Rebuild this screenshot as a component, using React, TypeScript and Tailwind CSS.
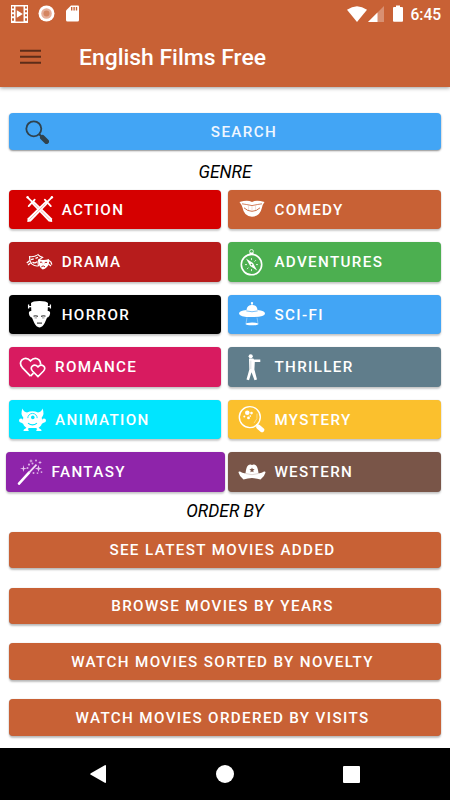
import React from 'react'

type Genre = {
  label: string
  color: string
  icon: React.ReactNode
  className?: string
}

const leftGenres: Genre[] = [
  { label: 'ACTION', color: 'bg-[#d50000]', icon: <SwordsIcon />, className: 'ml-[9px] mr-[3.6px] pl-[16.7px]' },
  { label: 'DRAMA', color: 'bg-[#b71c1c]', icon: <MasksIcon />, className: 'ml-[9px] mr-[3.6px] pl-[16.7px]' },
  { label: 'HORROR', color: 'bg-black', icon: <MonsterHeadIcon />, className: 'ml-[9px] mr-[3.6px] pl-[16.7px]' },
  { label: 'ROMANCE', color: 'bg-[#d81b60]', icon: <HeartsIcon />, className: 'ml-[9px] mr-[3.6px] pl-2.5' },
  { label: 'ANIMATION', color: 'bg-[#00e5ff]', icon: <CreatureIcon />, className: 'ml-[9px] mr-[3.6px] pl-2.5' },
  { label: 'FANTASY', color: 'bg-[#8e24aa]', icon: <WandIcon />, className: 'ml-1.5 pl-[9.6px]' },
]

const rightGenres: Genre[] = [
  { label: 'COMEDY', color: 'bg-[#c86135]', icon: <MouthIcon /> },
  { label: 'ADVENTURES', color: 'bg-[#4caf50]', icon: <CompassIcon /> },
  { label: 'SCI-FI', color: 'bg-[#42a5f5]', icon: <UfoIcon /> },
  { label: 'THRILLER', color: 'bg-[#607d8b]', icon: <ZombieIcon /> },
  { label: 'MYSTERY', color: 'bg-[#fbc02d]', icon: <MysteryIcon /> },
  { label: 'WESTERN', color: 'bg-[#795548]', icon: <HatIcon /> },
]

const orders = [
  'SEE LATEST MOVIES ADDED',
  'BROWSE MOVIES BY YEARS',
  'WATCH MOVIES SORTED BY NOVELTY',
  'WATCH MOVIES ORDERED BY VISITS',
]

export default function App() {
  return (
    <div className="flex h-[800px] w-[450px] flex-col overflow-hidden bg-white font-['Roboto',sans-serif]">
      <header className="h-[87px] shrink-0 bg-[#c86135] shadow-[0_1px_4px_rgba(0,0,0,0.4)]">
        <StatusBar />
        <div className="flex h-[60px] items-center pl-5">
          <svg width="21" height="15" viewBox="0 0 21 15" className="mb-0.5 fill-[#5d2d19]">
            <path d="M0 .7h21v2H0zM0 6.7h21v2H0zM0 12.7h21v2H0z" />
          </svg>
          <h1 className="ml-[38px] pt-[3px] text-[22.9px] font-medium text-white">English Films Free</h1>
        </div>
      </header>

      <main className="flex grow flex-col pt-[26px]">
        <button className="mx-[9px] flex h-[37px] shrink-0 items-center rounded bg-[#42a5f5] pl-4 shadow-[0_1px_2px_rgba(0,0,0,0.45)]">
          <svg width="24" height="24" viewBox="0 0 24 24" className="shrink-0">
            <circle cx="8.8" cy="8.8" r="7.5" fill="none" stroke="#30424d" strokeWidth="1.8" />
            <path d="M14 14l3 3" stroke="#30424d" strokeWidth="2" />
            <path d="M17.500 17.500l4 4" stroke="#30424d" strokeWidth="5" strokeLinecap="round" />
          </svg>
          <span className="grow pt-0.5 pr-0.5 text-center text-[15.2px] font-medium tracking-[1.36px] text-blue-50">SEARCH</span>
        </button>

        <SectionTitle className="mt-[9px]">GENRE</SectionTitle>
        <div className="mt-[4.6px] grid shrink-0 grid-cols-[225px_225px]">
          <div className="flex flex-col gap-[13px]">
            {leftGenres.map((g) => (
              <GenreButton key={g.label} {...g} />
            ))}
          </div>
          <div className="flex flex-col gap-[13px]">
            {rightGenres.map((g) => (
              <GenreButton key={g.label} {...g} className="ml-[3.4px] mr-[9px] pl-2.5" />
            ))}
          </div>
        </div>

        <SectionTitle className="mt-[6px]">ORDER BY</SectionTitle>
        <div className="mx-[9px] mt-[8.3px] flex flex-col gap-[19.3px]">
          {orders.map((label) => (
            <button
              key={label}
              className="h-[36.5px] shrink-0 rounded bg-[#c86135] pt-px pr-[5px] text-[15.2px] font-medium tracking-[1.36px] whitespace-nowrap text-white shadow-[0_2px_2px_rgba(0,0,0,0.25),0_0_1px_rgba(0,0,0,0.3)]"
            >
              {label}
            </button>
          ))}
        </div>
      </main>

      <nav className="flex h-[52px] shrink-0 items-center bg-black pl-[90px]">
        <svg width="16" height="18" viewBox="0 0 16 18" fill="white">
          <path d="M14.8.2Q16-.2 16 1v16q0 1.2-1.2.8L.8 9.8Q-.4 9 .8 8.2z" />
        </svg>
        <div className="ml-[110px] size-[18px] rounded-full bg-white" />
        <div className="ml-[109px] size-[17px] rounded-[1px] bg-white" />
      </nav>
    </div>
  )
}

function StatusBar() {
  return (
    <div className="flex h-[27px] items-center pl-[11px]">
      <svg width="17" height="18" viewBox="0 0 17 18">
        <path fill="white" d="M0 0h17v18H0z" />
        <path fill="#c86135" d="M4.5 1.5h8v15h-8zM1 1.5h2v2H1zM1 5.3h2v2H1zM1 9.3h2v2H1zM1 13.3h2v2.5H1zM14 1.5h2v2h-2zM14 5.3h2v2h-2zM14 9.3h2v2h-2zM14 13.3h2v2.5h-2z" />
        <path fill="white" d="M5.8 5.3l6 3.7-6 3.7z" />
      </svg>
      <svg width="17" height="17" viewBox="0 0 17 17" className="ml-2.5">
        <circle cx="8.5" cy="8.5" r="8" fill="white" />
        <circle cx="8.5" cy="8.5" r="5.3" fill="#e6ae98" />
        <circle cx="8.5" cy="8.5" r="3" fill="#d48561" />
      </svg>
      <svg width="13" height="17" viewBox="0 0 13 17" className="ml-[11px]">
        <path fill="white" d="M5 .5h7q1 0 1 1V15q0 1.5-1.5 1.5h-10Q0 16.5 0 15V5.5z" />
        <path fill="#c86135" d="M5 2h1.4v3.5H5zM7.4 2h1.4v3.5H7.4zM9.8 2h1.4v3.5H9.8z" />
      </svg>
      <svg width="20" height="16" viewBox="0 0 20 16" className="ml-[267.5px]">
        <path fill="white" d="M0 3.8Q10-3.5 20 3.8L10 16z" />
      </svg>
      <svg width="16" height="16" viewBox="0 0 16 16" className="ml-[1.5px]">
        <path fill="white" fillOpacity=".3" d="M16 0v16H0z" />
        <path fill="white" d="M9.5 6.5V16H0z" />
      </svg>
      <svg width="10" height="17" viewBox="0 0 10 17" className="ml-[9px]">
        <path fill="white" d="M3 .5h4v1.5h2q1 0 1 1V16q0 .8-1 .8H1q-1 0-1-.8V3q0-1 1-1h2z" />
      </svg>
      <span className="ml-[7.5px] pt-[3px] text-[15.6px] leading-4 font-medium text-white">6:45</span>
    </div>
  )
}

function SectionTitle({ children, className = '' }: { children: React.ReactNode; className?: string }) {
  return <h2 className={`h-[26px] shrink-0 text-center text-[17.4px] leading-[26px] italic text-black ${className}`}>{children}</h2>
}

function GenreButton({ label, color, icon, className = '' }: Genre) {
  return (
    <button
      className={`flex h-[39.5px] items-center gap-2 rounded text-[15.2px] font-medium tracking-[1.36px] text-white shadow-[0_2px_2px_rgba(0,0,0,0.2),0_0_1px_rgba(0,0,0,0.3)] ${color} ${className}`}
    >
      {icon}
      <span className="pt-0.5">{label}</span>
    </button>
  )
}

function Icon({ children }: { children: React.ReactNode }) {
  return (
    <svg width="28" height="28" viewBox="0 -0.6 28 28" fill="white" className="shrink-0">
      {children}
    </svg>
  )
}

function Sword() {
  return (
    <g>
      <path d="M1.800 2L7 7" stroke="white" strokeWidth="1.800" strokeLinecap="round" />
      <circle cx="1.600" cy="1.700" r="1.200" />
      <path d="M2.700 10.500l6-6.500" stroke="white" strokeWidth="1.800" fill="none" strokeLinecap="round" />
      <path d="M5.500 8L8 5.500 26 22.800l.2 3.500-3.500-.3z" />
      <path d="M8 8l16 16" stroke="#d50000" strokeOpacity=".6" strokeWidth=".5" />
    </g>
  )
}

function SwordsIcon() {
  return (
    <Icon>
      <Sword />
      <g transform="translate(27.500 0) scale(-1 1)">
        <Sword />
      </g>
    </Icon>
  )
}

function MasksIcon() {
  return (
    <Icon>
      <path d="M3.500 8Q8 8.800 12 6q1.500 2 4.500 2.800l-2 1.400q-2.500 1-2.500 4l.5 3Q9 18 6 15.500 3.500 13 3.500 8z" fill="none" stroke="white" strokeWidth="1.100" />
      <path d="M5 11l2.800-.8M9.500 9.800l2.500-1M6.500 13.500q2.500 1.800 4.500-.5" fill="none" stroke="white" strokeWidth="1.300" />
      <path d="M.8 14.500l3-2.500M2 16.500l2.500-2" stroke="white" strokeWidth="1.300" />
      <path d="M12.500 10.500q5 2 10.500 0 .8 5-2 8-2 2.300-4.300 2.300Q11.500 18 12.500 10.500z" />
      <path d="M14 13.700q1.300-.7 2.300.5M18.700 14.300q1.200-1.100 2.400-.4M15.300 18.300q1.800-2 3.700 0" fill="none" stroke="#b71c1c" strokeWidth="1" />
      <path d="M23 12l2 1.500.8 2.500M22.500 15.500l2.500 2" fill="none" stroke="white" strokeWidth="1.300" />
    </Icon>
  )
}

function MonsterHeadIcon() {
  return (
    <Icon>
      <path d="M5 2.500Q6.500.3 13.500.3T22 2.500l-.3 8q2.700-.3 2.400 2.500-.6 3.700-3 4l-2.400 5.500q-2 4.200-5.200 4.500-3.200-.3-5.200-4.500L5.900 17q-2.400-.3-3-4-.3-2.800 2.400-2.500z" />
      <path d="M2.600 4v4M24.400 4v4M2.800 6H6M21 6h3.200" stroke="white" strokeWidth="1.300" />
      <path d="M7.500 15.500q2.300-.6 4.500.2M19.500 15.500q-2.300-.6-4.500.2" stroke="black" strokeWidth=".9" fill="none" />
      <path d="M8.500 17.300h2.500M16 17.300h2.500" stroke="black" strokeOpacity=".5" strokeWidth=".8" />
      <path d="M11 22.500h5" stroke="black" strokeWidth=".9" />
    </Icon>
  )
}

function HeartsIcon() {
  return (
    <Icon>
      <path d="M11.500 22.500L3.300 14Q-.2 9.500 3 6.300q4.200-3.500 8.500 1 4.300-4.500 8.500-1Q22 8.500 21.500 11" fill="none" stroke="white" strokeWidth="1.700" />
      <path d="M19 23l-5.300-5.300q-2.700-3-.4-5.200 2.800-2.300 5.700.8 2.900-3.100 5.700-.8 2.300 2.200-.4 5.200z" fill="none" stroke="white" strokeWidth="1.600" />
      <path d="M11.500 22.500l3-3" stroke="white" strokeWidth="1.700" />
    </Icon>
  )
}

function CreatureIcon() {
  return (
    <Icon>
      <path d="M3.500 3q1 3.300 4.500 4 5.500-2.600 11 0 3.500-.7 4.500-4 2.300 5.500-.8 9l.6 4q-.5 4.500-4 6.500h-11.600q-3.500-2-4-6.500l.6-4Q1.200 8.500 3.500 3z" />
      <path d="M5 17.500l-3-2M22 17.500l3-2" stroke="white" strokeWidth="2.200" />
      <circle cx="2" cy="14.800" r="2" />
      <circle cx="25" cy="14.800" r="2" />
      <path d="M9 22l-2.500 2.300M18 22l2.500 2.300" stroke="white" strokeWidth="2" />
      <path d="M4.500 25.500q0-2.300 2.600-2.300t2.600 2.300zM17.300 25.500q0-2.300 2.600-2.300t2.600 2.300z" />
      <path d="M8.800 12.500a4.700 4.700 0 0 1 9.400 0" fill="none" stroke="#00e5ff" strokeWidth=".9" />
      <circle cx="13.800" cy="11.800" r="1.800" fill="#00e5ff" />
      <path d="M9 17.500q4.500 3.500 9 0" stroke="#00e5ff" strokeWidth="1.100" fill="none" />
      <path d="M11 25q2.500-2 5 0z" fill="#00e5ff" />
    </Icon>
  )
}

function WandIcon() {
  return (
    <Icon>
      <path d="M3 25L13 14" stroke="white" strokeWidth="2.600" strokeLinecap="round" />
      <path d="M13 14l7.500-8" stroke="#f1dcf5" strokeWidth="1.800" />
      <path d="M7.500 6.500l.7 2.800 2.800.7-2.800.7-.7 2.800-.7-2.800L4 10l2.800-.7zM15 .5l.5 1.500 1.500.5-1.500.5-.5 1.500-.5-1.500-1.500-.5 1.500-.5zM22.500 6.500l.8 2.700 2.700.8-2.700.8-.8 2.700-.8-2.700-2.700-.8 2.700-.8zM24 2l.5 1.500 1.500.5-1.500.5-.5 1.500-.5-1.500-1.500-.5 1.500-.5z" fill="#e8c4ef" />
      <g fill="#dcb1e5">
        <circle cx="13" cy="6" r="1.100" />
        <circle cx="16.500" cy="5" r="1" />
        <circle cx="20" cy="1.800" r="1" />
        <circle cx="17.500" cy="14.500" r="1" />
        <circle cx="25.500" cy="13.500" r=".9" />
        <circle cx="21.500" cy="14.500" r=".9" />
        <circle cx="11.500" cy="9.500" r="1" />
      </g>
    </Icon>
  )
}

function MouthIcon() {
  return (
    <Icon>
      <path d="M1.500 6.500Q8 4.500 11.500 5.500l2.500.8 2.500-.8q3.500-1 10 1-2 2.500-2.500 5.500-2 9-10 9.200Q6 21 4.500 12 3.500 9 1.500 6.500z" />
      <path d="M4 8.200q4.500.6 10 1.800 5.500-1.200 10-1.800" fill="none" stroke="#c86135" strokeWidth=".8" />
      <path d="M6 12.200q3.500 3.500 8 3.500t8-3.500" fill="none" stroke="#c86135" strokeWidth=".9" />
      <path d="M10.500 10v4.500M14 10.500v4.500M17.500 10v4.500" stroke="#c86135" strokeOpacity=".5" strokeWidth=".4" />
    </Icon>
  )
}

function CompassIcon() {
  return (
    <Icon>
      <circle cx="13.500" cy="16" r="10.200" fill="none" stroke="white" strokeWidth="1.600" />
      <circle cx="13.500" cy="2.800" r="1.900" fill="none" stroke="white" strokeWidth=".8" />
      <path d="M11.500 4.800h4" stroke="white" strokeWidth="1.500" />
      <path d="M8 9.800l7 4.700 4.200 7.500-7-4.700z" />
      <circle cx="13.500" cy="16" r=".8" fill="#4caf50" />
      <path d="M13.500 9.500v2M13.500 20.500v2M7 16h2M18 16h2M18 11.500l-1.500 1.500M9 20.500l1.500-1.500" stroke="white" strokeOpacity=".8" strokeWidth="1" />
    </Icon>
  )
}

function UfoIcon() {
  return (
    <Icon>
      <path d="M8.500 9.500q.5-5 5.500-5t5.500 5q7.500.8 7.500 3.300 0 3.700-13 3.700T1 12.800Q1 10.300 8.500 9.500z" />
      <circle cx="14" cy="2.500" r="1.200" />
      <path d="M14 2.500v3" stroke="white" strokeWidth="1" />
      <path d="M8.300 10.300q5.700 1.700 11.400 0" fill="none" stroke="#42a5f5" strokeWidth=".7" />
      <path d="M9 17l-1 6M19 17l1 6" fill="none" stroke="white" strokeOpacity=".6" strokeWidth=".6" />
      <ellipse cx="14" cy="23.300" rx="6.500" ry="1.400" />
    </Icon>
  )
}

function ZombieIcon() {
  return (
    <Icon>
      <circle cx="12.700" cy="2.700" r="2.100" />
      <path d="M11 5h4.300l.7.800h6.300v2.500h-5.500l-.4 7.500 2.600 10-2.500.8-3-8-2.500 8-2.500-.8L11.300 16z" />
      <path d="M12.800 7v8.500" stroke="#607d8b" strokeOpacity=".6" strokeWidth=".4" />
    </Icon>
  )
}

function MysteryIcon() {
  return (
    <Icon>
      <circle cx="11.800" cy="11.500" r="10.500" fill="none" stroke="white" strokeWidth="1.400" />
      <path d="M18.500 18.500l3 3" stroke="white" strokeWidth="2" />
      <path d="M20.500 21.300l3.500 3" stroke="white" strokeWidth="4.600" strokeLinecap="round" />
      <circle cx="9.300" cy="7.200" r="2.300" />
      <circle cx="13.500" cy="7.500" r="1.300" />
      <circle cx="6.300" cy="10.800" r="1" />
      <circle cx="10.500" cy="12.300" r="1.400" />
      <circle cx="12.300" cy="10.500" r=".8" />
      <path d="M19 8q1.300 5.500-3 9.500" fill="none" stroke="white" strokeOpacity=".7" strokeWidth=".6" />
    </Icon>
  )
}

function HatIcon() {
  return (
    <Icon>
      <path d="M7.500 15Q8 9.500 9.500 7.500q1-1.700 3-1.500l1.500.5 1.500-.5q2-.2 3 1.500 1.500 2 2 7.500 3.500-.3 5.500-2 1.500-.5 1.500.8-1 4-5 7.200-8.500-3-17 0-4-3.200-5-7.200 0-1.300 1.500-.8 2 1.700 5.500 2z" />
      <path d="M8 15q6 2.200 12 0" fill="none" stroke="#795548" strokeOpacity=".5" strokeWidth=".5" />
      <path d="M14 8.800l.7 1.600 1.900.2-1.400 1.300.4 1.800-1.600-.9-1.600.9.4-1.800-1.400-1.300 1.900-.2z" fill="#795548" />
    </Icon>
  )
}
